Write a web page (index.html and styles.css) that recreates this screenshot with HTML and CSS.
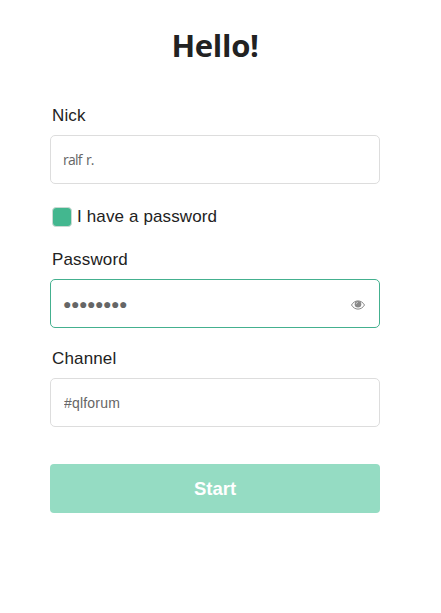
FILE: index.html
```html
<!DOCTYPE html>
<html lang="en">

<head>
    <meta charset="UTF-8">
    <meta name="viewport" content="width=device-width, initial-scale=1.0">
    <title>Hello!</title>
    <link rel="stylesheet" href="styles.css">
</head>

<body>
    <form class="login">
        <h1>Hello!</h1>
        <label class="label" for="nick">Nick</label>
        <input class="field nick" id="nick" type="text" value="ralf r." spellcheck="false">
        <label class="check">
            <input type="checkbox" checked>
            <span>I have a password</span>
        </label>
        <label class="label" for="password">Password</label>
        <div class="password-box">
            <input class="field password" id="password" type="text" value="●●●●●●●●">
            <svg class="eye" width="14" height="12" viewBox="0 0 14 12">
                <path d="M.5 6C2 3.4 4.3 1.9 7 1.9S12 3.4 13.5 6C12 8.6 9.7 10.1 7 10.1S2 8.6 .5 6z" fill="none" stroke="#888" stroke-width="1" />
                <circle cx="7" cy="5.3" r="3.3" fill="#888" />
                <path d="M5.2 5.2A1.8 1.8 0 0 1 7 3.4" fill="none" stroke="#fff" stroke-width=".5" />
            </svg>
        </div>
        <label class="label" for="channel">Channel</label>
        <input class="field channel" id="channel" type="text" value="#qlforum" spellcheck="false">
        <button class="start" type="button">Start</button>
    </form>
</body>

</html>
```
FILE: styles.css
```css
* {
    margin: 0;
    padding: 0;
    box-sizing: border-box;
}

body {
    font-family: "Liberation Sans", Arial, sans-serif;
    background-color: #fff;
    color: #222;
}

.login {
    display: flex;
    flex-direction: column;
    width: 330px;
    margin: 23px 0 0 50px;
}

.login h1 {
    font-family: "Open Sans", sans-serif;
    font-size: 31px;
    font-weight: 700;
    line-height: 44px;
    letter-spacing: -0.3px;
    text-align: center;
    margin-bottom: 39px;
}

.label {
    font-size: 17px;
    line-height: 20px;
    letter-spacing: 0.15px;
    margin: 0 0 9px 2px;
}

.field {
    display: block;
    width: 100%;
    height: 49px;
    padding: 0 12px;
    border: 1px solid #ddd;
    border-radius: 5px;
    outline: none;
    color: #666;
    font-family: "Open Sans", sans-serif;
    font-size: 14px;
    letter-spacing: -0.4px;
}

.nick {
    letter-spacing: -0.8px;
    word-spacing: 1.5px;
}

.check {
    display: flex;
    align-items: center;
    gap: 5px;
    height: 20px;
    margin: 23px 0 23px 2px;
    font-size: 17px;
    letter-spacing: 0.13px;
}

.check input {
    appearance: none;
    width: 20px;
    height: 20px;
    border: 1px solid #ccd9d3;
    border-radius: 4px;
    background-color: #43b78f;
}

.password-box {
    position: relative;
    margin-bottom: 21px;
}

.password {
    border-color: #44b08f;
    letter-spacing: -0.45px;
}

.eye {
    position: absolute;
    top: 20px;
    right: 15px;
}

.channel {
    padding-left: 13px;
    font-family: "Liberation Sans", Arial, sans-serif;
    letter-spacing: 0.2px;
}

.start {
    height: 49px;
    margin-top: 37px;
    border: none;
    border-radius: 4px;
    background-color: #95dcc3;
    color: #fff;
    font-family: inherit;
    font-size: 18.5px;
    font-weight: 700;
}
```
